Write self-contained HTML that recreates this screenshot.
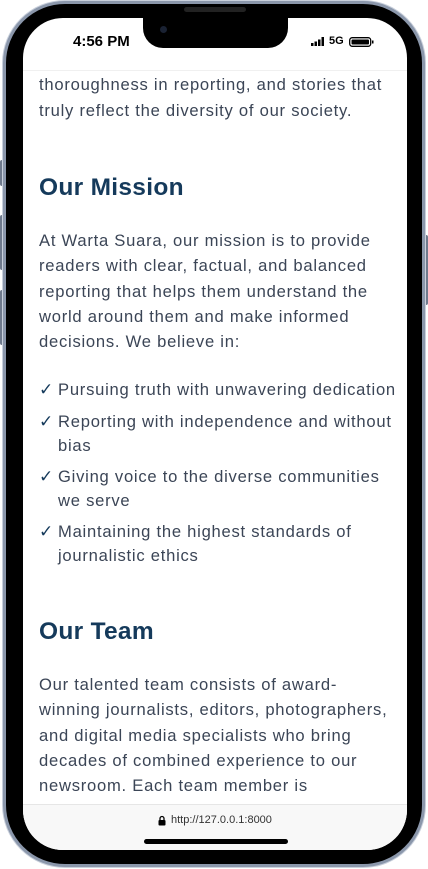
<!DOCTYPE html>
<html><head><meta charset="utf-8"><style>
*{margin:0;padding:0;box-sizing:border-box}
body{width:428px;height:869px;background:#fff;position:relative;overflow:hidden;font-family:"Liberation Sans",sans-serif}
.frame{position:absolute;left:3px;top:1px;width:422px;height:866px;border-radius:62px;background:#000;border:3px solid #8b97ab;box-shadow:0 0 0 1px #c9d0dc}
.screen{position:absolute;left:23px;top:18px;width:384px;height:832px;border-radius:40px;background:#fff;overflow:hidden}
.notch{position:absolute;left:143px;top:15px;width:145px;height:33px;background:#000;border-radius:0 0 20px 20px}
.cam{position:absolute;left:160px;top:26px;width:7px;height:7px;border-radius:50%;background:#1a2233}
.spk{position:absolute;left:184px;top:7px;width:62px;height:5px;border-radius:3px;background:#222}
.t{position:absolute;left:39px;white-space:nowrap;color:#3b4556;font-size:16.6px;letter-spacing:.75px;line-height:20px}
.h{position:absolute;left:39px;white-space:nowrap;color:#153a5b;font-size:24.5px;font-weight:bold;line-height:28px;letter-spacing:.3px}
.ck{position:absolute;left:39px;color:#153a5b;font-size:17px;line-height:20px}
.btn{position:absolute;background:#6f7a8d;border-radius:2px}
</style></head><body>
<div class="btn" style="left:0;top:160px;width:4px;height:26px"></div>
<div class="btn" style="left:0;top:215px;width:4px;height:55px"></div>
<div class="btn" style="left:0;top:290px;width:4px;height:55px"></div>
<div class="btn" style="left:424px;top:235px;width:4px;height:70px"></div>
<div class="frame"></div>
<div class="screen">
 <div style="position:absolute;left:0;top:52px;width:384px;height:1px;background:#f0f0f0"></div>
</div>
<div class="spk"></div>
<div class="notch"></div>
<div class="cam"></div>
<div style="position:absolute;left:73px;top:33px;font-size:15px;font-weight:bold;color:#000">4:56 PM</div>
<svg style="position:absolute;left:311px;top:37px" width="16" height="9"><rect x="0" y="6" width="2.5" height="3" fill="#000"/><rect x="3.5" y="4.5" width="2.5" height="4.5" fill="#000"/><rect x="7" y="2.5" width="2.5" height="6.5" fill="#000"/><rect x="10.5" y="0" width="2.5" height="9" fill="#000"/></svg>
<div style="position:absolute;left:329px;top:35px;font-size:11px;font-weight:bold;color:#000">5G</div>
<svg style="position:absolute;left:349px;top:37px" width="25" height="10"><rect x=".7" y=".7" width="21" height="8.6" rx="2.5" fill="none" stroke="#000" stroke-width="1.3"/><rect x="2.5" y="2.5" width="17.5" height="5" rx="1" fill="#000"/><rect x="23" y="3.5" width="1.5" height="3" fill="#000"/></svg>

<div class="t" style="top:75px">thoroughness in reporting, and stories that</div>
<div class="t" style="top:101px">truly reflect the diversity of our society.</div>
<div class="h" style="top:174px">Our Mission</div>
<div class="t" style="top:231px">At Warta Suara, our mission is to provide</div>
<div class="t" style="top:256px">readers with clear, factual, and balanced</div>
<div class="t" style="top:282px">reporting that helps them understand the</div>
<div class="t" style="top:307px">world around them and make informed</div>
<div class="t" style="top:332px">decisions. We believe in:</div>
<div class="ck" style="top:380px">✓</div><div class="t" style="left:58px;top:380px">Pursuing truth with unwavering dedication</div>
<div class="ck" style="top:412px">✓</div><div class="t" style="left:58px;top:412px">Reporting with independence and without</div>
<div class="t" style="left:58px;top:436px">bias</div>
<div class="ck" style="top:467px">✓</div><div class="t" style="left:58px;top:467px">Giving voice to the diverse communities</div>
<div class="t" style="left:58px;top:491px">we serve</div>
<div class="ck" style="top:522px">✓</div><div class="t" style="left:58px;top:522px">Maintaining the highest standards of</div>
<div class="t" style="left:58px;top:546px">journalistic ethics</div>
<div class="h" style="top:618px">Our Team</div>
<div class="t" style="top:675px">Our talented team consists of award-</div>
<div class="t" style="top:700px">winning journalists, editors, photographers,</div>
<div class="t" style="top:726px">and digital media specialists who bring</div>
<div class="t" style="top:751px">decades of combined experience to our</div>
<div class="t" style="top:776px">newsroom. Each team member is</div>
<div style="position:absolute;left:23px;top:804px;width:384px;height:46px;background:#f8f8f8;border-top:1px solid #e6e6e6;border-radius:0 0 40px 40px"></div>
<svg style="position:absolute;left:158px;top:815px" width="8" height="11"><path d="M2 5V3.5a2 2 0 0 1 4 0V5" fill="none" stroke="#000" stroke-width="1.3"/><rect x="0.5" y="5" width="7" height="5.5" rx="1" fill="#000"/></svg>
<div style="position:absolute;left:171px;top:814px;font-size:11px;color:#333">http://127.0.0.1:8000</div>
<div style="position:absolute;left:144px;top:839px;width:144px;height:5px;border-radius:3px;background:#000"></div>
</body></html>
